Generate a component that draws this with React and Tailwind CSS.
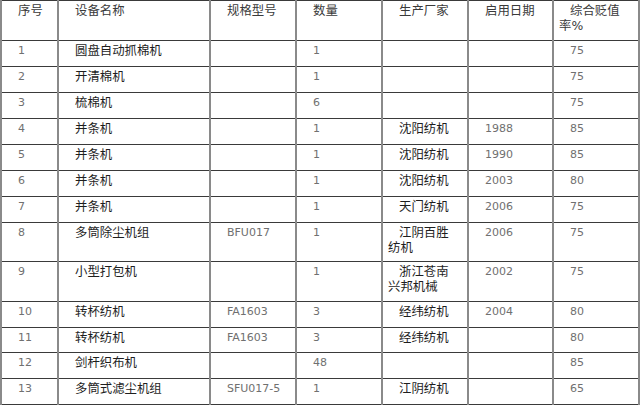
import React from 'react';

const cols = [57, 152, 86, 86, 86, 85, 86];

const header = ['序号', '设备名称', '规格型号', '数量', '生产厂家', '启用日期', '综合贬值率%'];

const rows = [
  { h: 26, c: ['1', '圆盘自动抓棉机', '', '1', '', '', '75'] },
  { h: 26, c: ['2', '开清棉机', '', '1', '', '', '75'] },
  { h: 26, c: ['3', '梳棉机', '', '6', '', '', '75'] },
  { h: 26, c: ['4', '并条机', '', '1', '沈阳纺机', '1988', '85'] },
  { h: 26, c: ['5', '并条机', '', '1', '沈阳纺机', '1990', '85'] },
  { h: 26, c: ['6', '并条机', '', '1', '沈阳纺机', '2003', '80'] },
  { h: 26, c: ['7', '并条机', '', '1', '天门纺机', '2006', '75'] },
  { h: 39, c: ['8', '多筒除尘机组', 'BFU017', '1', '江阴百胜纺机', '2006', '75'] },
  { h: 40, c: ['9', '小型打包机', '', '1', '浙江苍南兴邦机械', '2002', '75'] },
  { h: 26, c: ['10', '转杯纺机', 'FA1603', '3', '经纬纺机', '2004', '80'] },
  { h: 25, c: ['11', '转杯纺机', 'FA1603', '3', '经纬纺机', '', '80'] },
  { h: 26, c: ['12', '剑杆织布机', '', '48', '', '', '85'] },
  { h: 26, c: ['13', '多筒式滤尘机组', 'SFU017-5', '1', '江阴纺机', '', '65'] },
];

const isLatin = (s) => /^[A-Za-z0-9\-%]+$/.test(s);

function Cell({ text, head }) {
  const latin = isLatin(text);
  return (
    <td
      className={
        'border-y border-y-[#3a3a3a] border-x-2 border-x-[#8a8a8a] align-top pl-[5px] pr-[12px] pt-[2px] indent-[11px] leading-[15px] ' +
        (latin
          ? "text-[11px] text-[#707070] font-['DejaVu_Sans',sans-serif]"
          : head
          ? "text-[12.4px] text-[#3a3a3a] font-['DejaVu_Sans','Noto_Sans_CJK_SC',sans-serif]"
          : "text-[12.4px] text-[#1e1e1e] font-['DejaVu_Sans','Noto_Sans_CJK_SC',sans-serif]")
      }
    >
      {text}
    </td>
  );
}

export default function App() {
  return (
    <div className="w-[640px] h-[406px] bg-white overflow-hidden">
      <table className="table-fixed border-collapse w-[638px]">
        <colgroup>
          {cols.map((w, i) => (
            <col key={i} style={{ width: w }} />
          ))}
        </colgroup>
        <tbody>
          <tr className="h-[40px]">
            {header.map((t, i) => (
              <Cell key={i} text={t} head />
            ))}
          </tr>
          {rows.map((r, i) => (
            <tr key={i} style={{ height: r.h }}>
              {r.c.map((t, j) => (
                <Cell key={j} text={t} />
              ))}
            </tr>
          ))}
        </tbody>
      </table>
    </div>
  );
}
